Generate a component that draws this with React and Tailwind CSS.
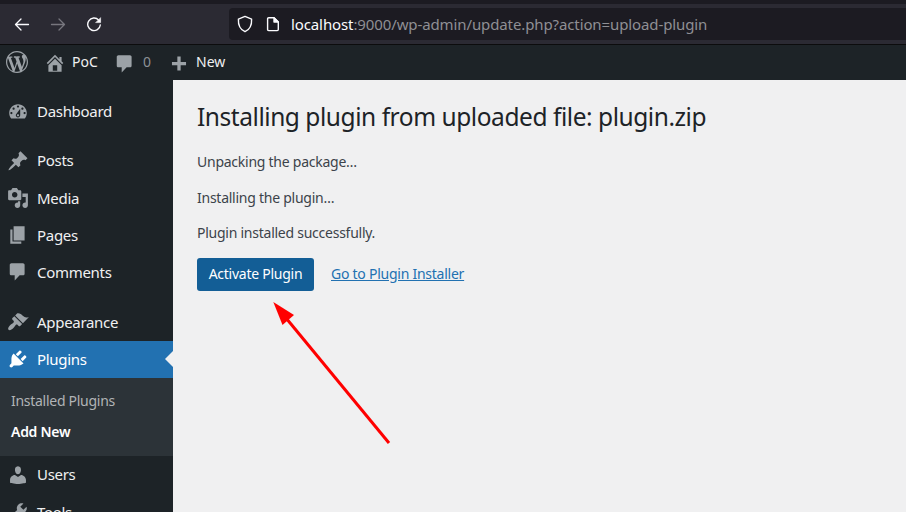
const paths = {
  wordpress:
    "M20 10c0-5.51-4.49-10-10-10C4.48 0 0 4.49 0 10c0 5.52 4.48 10 10 10 5.51 0 10-4.48 10-10zM7.78 15.37L4.37 6.22c.55-.02 1.17-.08 1.17-.08.5-.06.44-1.13-.06-1.11 0 0-1.45.11-2.37.11-.18 0-.37 0-.58-.01C4.12 2.69 6.87 1.11 10 1.11c2.33 0 4.45.87 6.05 2.34-.68-.11-1.65.39-1.65 1.58 0 .74.45 1.36.9 2.1.35.61.55 1.36.55 2.46 0 1.49-1.4 5-1.4 5l-3.03-8.37c.54-.02.82-.17.82-.17.5-.05.44-1.25-.06-1.22 0 0-1.44.12-2.38.12-.87 0-2.33-.12-2.33-.12-.5-.03-.56 1.2-.06 1.22l.92.08 1.26 3.41zM17.41 10c.24-.64.74-1.87.43-4.25.7 1.29 1.05 2.71 1.05 4.25 0 3.29-1.73 6.24-4.4 7.78.97-2.59 1.94-5.2 2.92-7.78zM6.1 18.09C3.12 16.65 1.11 13.53 1.11 10c0-1.3.23-2.48.72-3.59C3.25 10.3 4.67 14.2 6.1 18.09zm4.03-6.63l2.58 6.98c-.86.29-1.76.45-2.71.45-.79 0-1.57-.11-2.29-.33.81-2.38 1.62-4.74 2.42-7.1z",
  home: "M16 8.5l1.53 1.53-1.06 1.06L10 4.6l-6.47 6.49-1.06-1.06L10 2.5l4 4v-2h2v4zm-6-2.46l6 5.99V18H4v-5.97zM12 17v-5H8v5h4z",
  comments:
    "M4 2h10.500c.8 0 1.500.7 1.500 1.500v8c0 .8-.7 1.500-1.500 1.500h-3l-4.500 4.800v-4.800H4c-.8 0-1.500-.7-1.500-1.500v-8c0-.8.7-1.500 1.500-1.500z",
  plus: "M16.400 9v3h-4.900v4.900h-3V12H3.600V9h4.900V4.100h3V9z",
  dashboard:
    "M3.76 16h12.48c1.1-1.37 1.76-3.11 1.76-5 0-4.42-3.58-8-8-8s-8 3.58-8 8c0 1.89.66 3.63 1.76 5zM10 4c.55 0 1 .45 1 1s-.45 1-1 1-1-.45-1-1 .45-1 1-1zM6 6c.55 0 1 .45 1 1s-.45 1-1 1-1-.45-1-1 .45-1 1-1zm8 0c.55 0 1 .45 1 1s-.45 1-1 1-1-.45-1-1 .45-1 1-1zm-5.370 5.550L12 7v6c0 1.1-.9 2-2 2s-2-.9-2-2c0-.57.24-1.080.63-1.450zM4 10c.55 0 1 .45 1 1s-.45 1-1 1-1-.45-1-1 .45-1 1-1zm12 0c.55 0 1 .45 1 1s-.45 1-1 1-1-.45-1-1 .45-1 1-1zm-5 3c0-.55-.45-1-1-1s-1 .45-1 1 .45 1 1 1 1-.45 1-1z",
  post: "M10.440 3.020l1.820-1.820 6.360 6.350-1.830 1.820c-1.050-.68-2.480-.57-3.410.36l-.75.75c-.92.93-1.040 2.350-.35 3.410l-1.830 1.820-2.410-2.410-2.800 2.790c-.42.42-3.380 2.710-3.800 2.290s1.860-3.390 2.280-3.810l2.790-2.790L4.100 9.360l1.830-1.820c1.050.69 2.480.57 3.400-.36l.75-.75c.93-.92 1.050-2.350.36-3.410z",
  media:
    "M13 11V4c0-.55-.45-1-1-1h-1.670L9 1H5L3.670 3H2c-.55 0-1 .45-1 1v7c0 .55.45 1 1 1h10c.55 0 1-.45 1-1zM7 4.500c1.380 0 2.500 1.120 2.500 2.500S8.380 9.500 7 9.500 4.500 8.380 4.500 7 5.620 4.500 7 4.500zM14 6h5v10.500c0 1.380-1.120 2.500-2.500 2.500S14 17.880 14 16.500s1.120-2.500 2.500-2.500c.17 0 .34.02.5.05V9h-3V6zm-4 8.050V13h2v3.500c0 1.380-1.120 2.500-2.500 2.500S7 17.880 7 16.500 8.120 14 9.500 14c.17 0 .34.02.5.05z",
  page: "M6 15V2h10v13H6zm-1 1h8v2H3V5h2v11z",
  appearance:
    "M14.480 11.060L7.410 3.990l1.500-1.500c.5-.56 2.300-.47 3.510.32 1.210.8 1.430 1.280 2.910 2.100 1.180.64 2.450 1.260 4.450.85zm-.71.71L6.700 4.700 4.930 6.470c-.39.39-.39 1.020 0 1.410l1.060 1.060c.39.39.39 1.030 0 1.420-.6.6-1.430 1.110-2.210 1.690-.35.26-.7.53-1.010.84C1.430 14.230.4 16.080 1.400 17.070c.99 1 2.840-.03 4.180-1.360.31-.31.58-.66.85-1.020.57-.78 1.080-1.610 1.690-2.210.39-.39 1.020-.39 1.410 0l1.060 1.060c.39.39 1.020.39 1.410 0z",
  plugins:
    "M13.110 4.360L9.870 7.600 8 5.730l3.240-3.240c.35-.34 1.050-.2 1.560.32.52.51.66 1.210.31 1.550zm-8 1.770l.91-1.120 9.010 9.010-1.190.84c-.71.71-2.630 1.160-3.820 1.160H6.140L4.900 17.260c-.59.59-1.540.59-2.120 0-.59-.58-.59-1.530 0-2.120l1.240-1.240v-3.880c0-1.130.4-3.190 1.090-3.890zm7.260 3.970l3.240-3.240c.34-.35 1.040-.21 1.550.31.52.51.66 1.210.31 1.550l-3.240 3.250z",
  users:
    "M10 9.250c-2.270 0-2.730-3.440-2.730-3.440C7 4.020 7.820 2 9.970 2c2.160 0 2.980 2.020 2.710 3.810 0 0-.41 3.440-2.680 3.440zm0 2.570L12.720 10c2.390 0 4.520 2.330 4.520 4.530v2.490s-3.650 1.130-7.240 1.130c-3.650 0-7.240-1.130-7.240-1.130v-2.490c0-2.250 1.940-4.480 4.470-4.480z",
  tools:
    "M16.680 9.770c-1.340 1.340-3.300 1.670-4.950.99l-5.410 6.520c-.99.99-2.590.99-3.580 0s-.99-2.590 0-3.570l6.520-5.420c-.68-1.650-.35-3.610.99-4.950 1.280-1.280 3.120-1.620 4.720-1.060l-2.890 2.890 2.820 2.820 2.860-2.870c.53 1.580.18 3.390-1.080 4.650zM3.810 16.210c.4.39 1.040.39 1.430 0 .4-.4.4-1.040 0-1.430-.39-.4-1.030-.4-1.430 0-.39.39-.39 1.030 0 1.430z",
};

function Icon({ name, className = "" }) {
  return (
    <svg viewBox="0 0 20 20" fill="currentColor" className={`shrink-0 ${className}`}>
      <path d={paths[name]} />
    </svg>
  );
}

function BrowserBar() {
  return (
    <header className="h-[45px] shrink-0 border-t-4 border-b border-t-[#1c1b22] border-b-[#0c0c0d] bg-[#2b2a33] flex items-center text-[#fbfbfe]">
      <div className="w-[229px] shrink-0 flex items-center pl-[14px] gap-5">
        <svg viewBox="0 0 16 16" className="size-4" fill="none" stroke="currentColor" strokeWidth="1.3" strokeLinecap="round" strokeLinejoin="round">
          <path d="M14.500 8.500H1.500M7 3L1.500 8.500L7 14" />
        </svg>
        <svg viewBox="0 0 16 16" className="size-4 text-[#77767e]" fill="none" stroke="currentColor" strokeWidth="1.3" strokeLinecap="round" strokeLinejoin="round">
          <path d="M1.500 8.500H14.500M9 3L14.500 8.500L9 14" />
        </svg>
        <svg viewBox="0 0 16 16" className="size-4" fill="none" stroke="currentColor" strokeWidth="1.4" strokeLinecap="round">
          <path d="M12.700 4.100A6.300 6.300 0 1 0 14.300 9" />
          <path d="M14.600 2v4.600H10z" fill="currentColor" strokeWidth="0.6" strokeLinejoin="round" />
        </svg>
      </div>
      <div className="h-8 flex-1 rounded-l bg-[#1c1b22] flex items-center pl-2">
        <svg viewBox="0 0 16 18" className="w-4 h-[18px]" fill="none" stroke="currentColor" strokeWidth="1.4" strokeLinejoin="round">
          <path d="M8 1.400L14.600 4.100C14.900 10 12.600 14.700 8 16.700C3.400 14.700 1.100 10 1.400 4.100Z" />
        </svg>
        <svg viewBox="0 0 14 16" className="ml-[13px] w-[14px] h-4" fill="none" stroke="currentColor" strokeWidth="1.400" strokeLinejoin="round">
          <path d="M2.700 1.700H8L12.300 6V13.500Q12.300 14.600 11.200 14.600H2.700Q1.600 14.600 1.600 13.500V2.800Q1.600 1.700 2.700 1.700Z" />
          <path d="M8 1.700V6H12.300Z" fill="currentColor" />
        </svg>
        <p className="ml-[11px] text-[15px] leading-8 tracking-[-0.11px] whitespace-nowrap text-[#8f8f94]">
          <span className="text-[#fbfbfe]">localhost</span>:9000/wp-admin/update.php?action=upload-plugin
        </p>
      </div>
    </header>
  );
}

function AdminBar() {
  return (
    <nav className="h-[35px] shrink-0 bg-[#1d2327] flex items-center pl-[6px] pb-px text-[14px] text-[#f0f0f1]">
      <Icon name="wordpress" className="size-[22px] text-[#9ca2a7]" />
      <Icon name="home" className="ml-4 mt-px size-[22px] text-[#9ca2a7]" />
      <span className="ml-[6px] w-[26px] pb-px">PoC</span>
      <Icon name="comments" className="ml-4 mt-[3px] size-[22px] text-[#9ca2a7]" />
      <span className="ml-[7px] w-2 pb-px text-[#8c9196]">0</span>
      <Icon name="plus" className="ml-[17px] mt-px size-[22px] text-[#9ca2a7]" />
      <span className="ml-[6px] pb-px">New</span>
    </nav>
  );
}

function MenuItem({ icon, label, active }) {
  return (
    <li className={`relative h-[37.300px] shrink-0 flex items-center pl-[7px] gap-2 text-[15px] tracking-[-0.3px] ${active ? "bg-[#2271b1] text-white" : "text-[#f0f0f1]"}`}>
      <Icon name={icon} className={`size-[22px] ${active ? "text-white" : "text-[#9ca2a7]"}`} />
      <span>{label}</span>
      {active && <span className="absolute right-0 top-1/2 -translate-y-1/2 border-y-8 border-r-8 border-y-transparent border-r-[#f0f0f1]" />}
    </li>
  );
}

function Sidebar() {
  return (
    <aside className="w-[173px] shrink-0 bg-[#1d2327] overflow-hidden">
      <ul className="flex flex-col pt-[13px]">
        <MenuItem icon="dashboard" label="Dashboard" />
        <li className="h-[11.600px] shrink-0" />
        <MenuItem icon="post" label="Posts" />
        <MenuItem icon="media" label="Media" />
        <MenuItem icon="page" label="Pages" />
        <MenuItem icon="comments" label="Comments" />
        <li className="h-[12.400px] shrink-0" />
        <MenuItem icon="appearance" label="Appearance" />
        <MenuItem icon="plugins" label="Plugins" active />
        <li className="h-[78px] shrink-0 bg-[#2c3338] pt-[7px] pl-[11px] text-[14px] tracking-[-0.28px]">
          <p className="leading-[31px] text-[#b1b4b6]">Installed Plugins</p>
          <p className="leading-[31px] font-semibold text-white">Add New</p>
        </li>
        <MenuItem icon="users" label="Users" />
        <MenuItem icon="tools" label="Tools" />
      </ul>
    </aside>
  );
}

function Content() {
  return (
    <main className="flex-1 pl-6 pt-5 text-[14px] leading-[21px] tracking-[-0.25px] text-[#3c434a]">
      <h1 className="text-[24.500px] leading-[33px] tracking-[-0.45px] text-[#1d2327]">Installing plugin from uploaded file: plugin.zip</h1>
      <p className="mt-[18px]">Unpacking the package…</p>
      <p className="mt-[15px]">Installing the plugin…</p>
      <p className="mt-[14px]">Plugin installed successfully.</p>
      <div className="mt-[15px] flex items-center gap-[17px]">
        <button className="w-[117px] h-[33px] pb-0.5 rounded-[3px] bg-[#135e96] text-white whitespace-nowrap">Activate Plugin</button>
        <a className="pb-0.5 text-[#2271b1] underline">Go to Plugin Installer</a>
      </div>
    </main>
  );
}

export default function App() {
  return (
    <div className="relative w-[906px] h-[512px] overflow-hidden bg-[#f0f0f1] flex flex-col font-['Noto_Sans',sans-serif]">
      <BrowserBar />
      <AdminBar />
      <div className="flex-1 min-h-0 flex">
        <Sidebar />
        <Content />
      </div>
      <svg viewBox="0 0 120 145" className="absolute left-[271px] top-[300px] w-[120px] h-[145px]" fill="#ff0000">
        <path d="M15 18L118 143" stroke="#ff0000" strokeWidth="3" />
        <path d="M2.300 2L23 15L11.500 25Z" />
      </svg>
    </div>
  );
}
